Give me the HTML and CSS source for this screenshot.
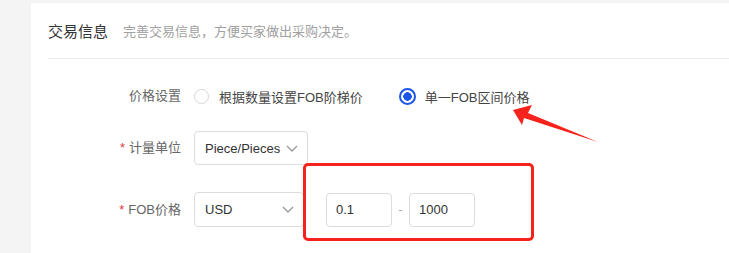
FILE: index.html
```html
<!DOCTYPE html>
<html lang="zh-CN">
<head>
<meta charset="UTF-8">
<title>交易信息</title>
<link rel="stylesheet" href="styles.css">
</head>
<body>
<div class="page">
  <div class="card">
    <div class="header">
      <span class="title">交易信息</span>
      <span class="subtitle">完善交易信息，方便买家做出采购决定。</span>
    </div>

    <div class="form">
      <div class="row row-price">
        <div class="label">价格设置</div>
        <label class="radio">
          <span class="dot"></span>
          <span>根据数量设置FOB阶梯价</span>
        </label>
        <label class="radio checked">
          <span class="dot"></span>
          <span>单一FOB区间价格</span>
        </label>
      </div>

      <div class="row row-unit">
        <div class="label"><i>*</i>计量单位</div>
        <div class="select select-unit">
          <span>Piece/Pieces</span>
          <svg class="chev" width="12" height="7" viewBox="0 0 12 7"><path d="M1 1 L6 6 L11 1" fill="none" stroke="#999" stroke-width="1.3"/></svg>
        </div>
      </div>

      <div class="row row-fob">
        <div class="label"><i>*</i>FOB价格</div>
        <div class="select select-cur">
          <span>USD</span>
          <svg class="chev" width="12" height="7" viewBox="0 0 12 7"><path d="M1 1 L6 6 L11 1" fill="none" stroke="#999" stroke-width="1.3"/></svg>
        </div>
        <div class="range">
          <div class="input">0.1</div>
          <span class="dash">-</span>
          <div class="input">1000</div>
        </div>
      </div>
    </div>
  </div>
</div>

<!-- 标注 -->
<div class="mark-box"></div>
<svg class="mark-arrow" width="729" height="253" viewBox="0 0 729 253">
  <polygon points="513,110 532,105 528,113 598,142 524,118 522,125" fill="#f5231b"/>
</svg>
</body>
</html>
```

FILE: styles.css
```css
body {
  margin: 0;
  background: #f4f4f4;
  font-family: "Liberation Sans", "Noto Sans CJK SC", sans-serif;
  font-size: 13px;
  color: #333;
  overflow: hidden;
}

.page {
  display: flex;
  padding: 3px 0 0 31px;
  height: 250px;
}

.card {
  flex: 1;
  background: #fff;
  padding-left: 17px;
}

.header {
  display: flex;
  align-items: center;
  height: 55px;
  border-bottom: 1px solid #ececec;
}

.title {
  font-size: 15px;
  color: #333;
}

.subtitle {
  margin-left: 15px;
  font-size: 13px;
  color: #a0a0a0;
}

.form {
  padding-top: 20px;
}

.row {
  display: flex;
  align-items: center;
}

.row-price { height: 34px; }
.row-unit { height: 34px; margin-top: 18px; }
.row-fob { height: 35px; margin-top: 27px; }

.label {
  width: 133px;
  margin-right: 13px;
  text-align: right;
  color: #666;
  margin-top: -3px;
}

.label i {
  font-style: normal;
  color: #e4393c;
  margin-right: 4px;
}

.radio {
  display: flex;
  align-items: center;
  color: #444;
  margin-right: 36px;
}

.radio .dot {
  width: 15px;
  height: 15px;
  border: 1px solid #d6d6d6;
  border-radius: 50%;
  margin-right: 10px;
  box-sizing: border-box;
}

.radio.checked .dot {
  width: 17px;
  height: 17px;
  border: 2px solid #1a55e8;
  background: radial-gradient(circle, #1a55e8 0 4px, #fff 4.5px);
  margin-right: 9px;
}

.select {
  display: flex;
  align-items: center;
  justify-content: space-between;
  height: 100%;
  box-sizing: border-box;
  border: 1px solid #dcdcdc;
  border-radius: 4px;
  padding: 0 9px 0 10px;
  color: #333;
  font-size: 13px;
}

.select-unit { width: 114px; }
.select-cur { width: 110px; margin-right: 22px; }

.range {
  display: flex;
  align-items: center;
  height: 34px;
}

.input {
  width: 66px;
  height: 34px;
  box-sizing: border-box;
  border: 1px solid #dcdcdc;
  border-radius: 4px;
  padding-left: 9px;
  display: flex;
  align-items: center;
  color: #333;
}

.dash {
  width: 17px;
  text-align: center;
  color: #aaa;
}

.mark-box {
  position: absolute;
  left: 303px;
  top: 163px;
  width: 231px;
  height: 78px;
  box-sizing: border-box;
  border: 3px solid #f5231b;
  border-radius: 5px;
}

.mark-arrow {
  position: absolute;
  left: 0;
  top: 0;
}
```
